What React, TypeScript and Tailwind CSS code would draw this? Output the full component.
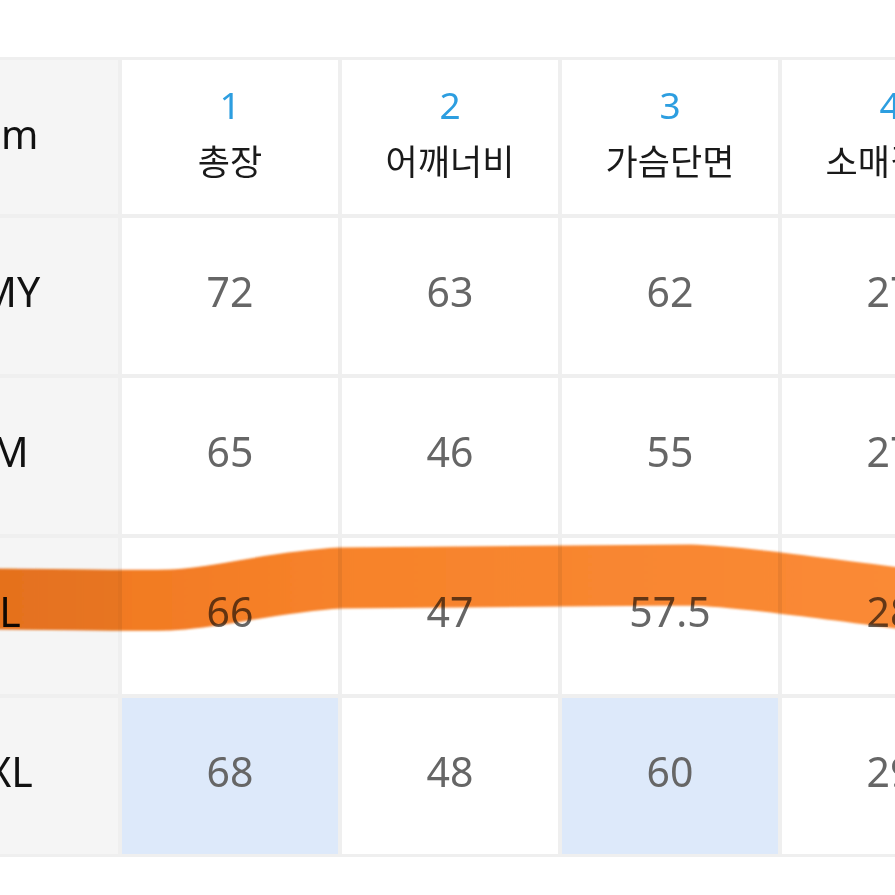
const headers = [
  { no: "1", label: "총장" },
  { no: "2", label: "어깨너비" },
  { no: "3", label: "가슴단면" },
  { no: "4", label: "소매길이" },
];

const rows = [
  { size: "MY", values: ["72", "63", "62", "27"], marked: [] as number[] },
  { size: "M", values: ["65", "46", "55", "27"], marked: [] as number[] },
  { size: "L", values: ["66", "47", "57.5", "28"], marked: [] as number[] },
  { size: "XL", values: ["68", "48", "60", "29"], marked: [0, 2] },
];

const font = {
  fontFamily: '"Noto Sans", "Noto Sans CJK KR", sans-serif',
};

const Stroke = () => (
  <svg
    className="pointer-events-none absolute left-0 top-0 mix-blend-multiply"
    width="895"
    height="895"
    viewBox="0 0 895 895"
  >
    <defs>
      <linearGradient id="marker" x1="0" y1="0" x2="895" y2="0" gradientUnits="userSpaceOnUse">
        <stop offset="0" stopColor="#ef761f" />
        <stop offset="0.4" stopColor="#f7832b" />
        <stop offset="1" stopColor="#fa8a36" />
      </linearGradient>
      <filter id="soft" filterUnits="userSpaceOnUse" x="-20" y="500" width="940" height="180">
        <feGaussianBlur stdDeviation="0.8" />
      </filter>
    </defs>
    <path
      d="M -10 599 C 60 599, 120 601, 170 600 C 220 598, 270 582, 340 578 L 690 575 C 730 576, 790 584, 905 599"
      fill="none"
      stroke="url(#marker)"
      strokeWidth="61"
      filter="url(#soft)"
    />
  </svg>
);

export default function App() {
  return (
    <div className="relative h-[895px] w-[895px] overflow-hidden bg-white" style={font}>
      <div className="mt-[57px] ml-[-98px] grid w-[1096px] grid-cols-[216px_216px_216px_216px_216px] gap-[4px] bg-[#efefef] py-[3px]">
        <div className="flex h-[154px] items-center justify-center bg-[#f5f5f5] pb-[6px] text-[40px] text-[#111]">
          cm
        </div>
        {headers.map((h) => (
          <div key={h.no} className="flex h-[154px] flex-col items-center justify-center bg-white pt-[2px]">
            <span className="text-[37px] leading-[48px] text-[#2d9ee0]">{h.no}</span>
            <span className="text-[35px] leading-[66px] text-[#1a1a1a]">{h.label}</span>
          </div>
        ))}
        {rows.map((r) => (
          <>
            <div
              key={r.size}
              className="flex h-[156px] items-center justify-center bg-[#f5f5f5] pb-[8px] text-[41px] text-[#111]"
            >
              {r.size}
            </div>
            {r.values.map((v, i) => (
              <div
                key={r.size + i}
                className={`flex h-[156px] items-center justify-center pb-[8px] text-[41px] text-[#666] ${
                  r.marked.includes(i) ? "bg-[#dde9fa]" : "bg-white"
                }`}
              >
                {v}
              </div>
            ))}
          </>
        ))}
      </div>
      <Stroke />
    </div>
  );
}
